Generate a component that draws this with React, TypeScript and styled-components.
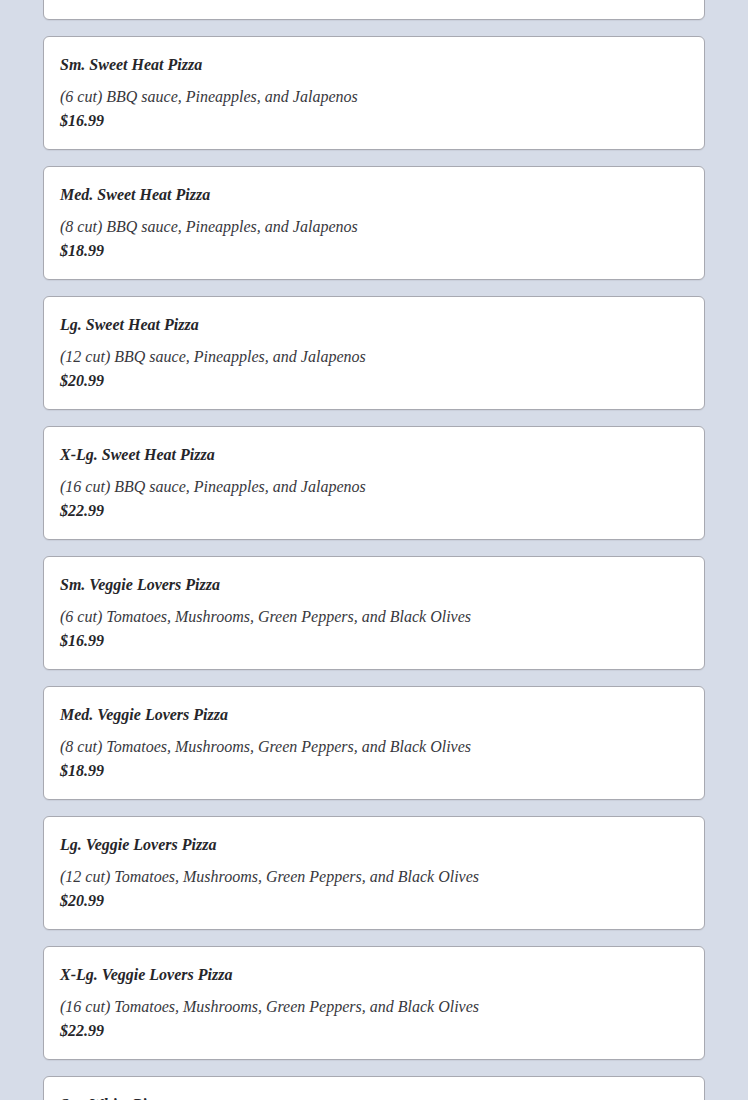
import React from 'react';
import styled, { createGlobalStyle } from 'styled-components';

const GlobalStyle = createGlobalStyle`
  html, body {
    margin: 0;
    padding: 0;
    background: #d6dce8;
  }
  body {
    font-family: "Liberation Serif", "Times New Roman", serif;
    color: #26262a;
  }
`;

const Page = styled.div`
  padding: 0 43px;
  height: 1100px;
  overflow: hidden;
`;

const List = styled.div`
  display: flex;
  flex-direction: column;
  gap: 16px;
  margin-top: -94px;
`;

const Card = styled.div`
  background: #ffffff;
  border: 1px solid #a8a9b1;
  border-radius: 6px;
  padding: 17px 16px 17px;
  box-shadow: 0 1px 1px rgba(0, 0, 0, 0.06);
`;

const Title = styled.h4`
  margin: 0;
  font-size: 16px;
  line-height: 22px;
  font-weight: 700;
  font-style: italic;
`;

const Description = styled.p`
  margin: 9px 0 0;
  font-size: 16px;
  line-height: 24px;
  font-style: italic;
  color: #38383d;
`;

const Price = styled.p`
  margin: 0;
  font-size: 16px;
  line-height: 23px;
  font-weight: 700;
  font-style: italic;
`;

type Item = { name: string; desc: string; price: string };

const items: Item[] = [
  { name: 'X-Lg. Hawaiian Pizza', desc: '(16 cut) Ham and Pineapples', price: '$22.99' },
  { name: 'Sm. Sweet Heat Pizza', desc: '(6 cut) BBQ sauce, Pineapples, and Jalapenos', price: '$16.99' },
  { name: 'Med. Sweet Heat Pizza', desc: '(8 cut) BBQ sauce, Pineapples, and Jalapenos', price: '$18.99' },
  { name: 'Lg. Sweet Heat Pizza', desc: '(12 cut) BBQ sauce, Pineapples, and Jalapenos', price: '$20.99' },
  { name: 'X-Lg. Sweet Heat Pizza', desc: '(16 cut) BBQ sauce, Pineapples, and Jalapenos', price: '$22.99' },
  { name: 'Sm. Veggie Lovers Pizza', desc: '(6 cut) Tomatoes, Mushrooms, Green Peppers, and Black Olives', price: '$16.99' },
  { name: 'Med. Veggie Lovers Pizza', desc: '(8 cut) Tomatoes, Mushrooms, Green Peppers, and Black Olives', price: '$18.99' },
  { name: 'Lg. Veggie Lovers Pizza', desc: '(12 cut) Tomatoes, Mushrooms, Green Peppers, and Black Olives', price: '$20.99' },
  { name: 'X-Lg. Veggie Lovers Pizza', desc: '(16 cut) Tomatoes, Mushrooms, Green Peppers, and Black Olives', price: '$22.99' },
  { name: 'Sm. White Pizza', desc: '(6 cut) Garlic sauce, Spinach, and Tomatoes', price: '$16.99' },
];

function App() {
  return (
    <>
      <GlobalStyle />
      <Page>
        <List>
          {items.map((item, i) => (
            <Card key={i}>
              <Title>{item.name}</Title>
              <Description>{item.desc}</Description>
              <Price>{item.price}</Price>
            </Card>
          ))}
        </List>
      </Page>
    </>
  );
}

export default App;
